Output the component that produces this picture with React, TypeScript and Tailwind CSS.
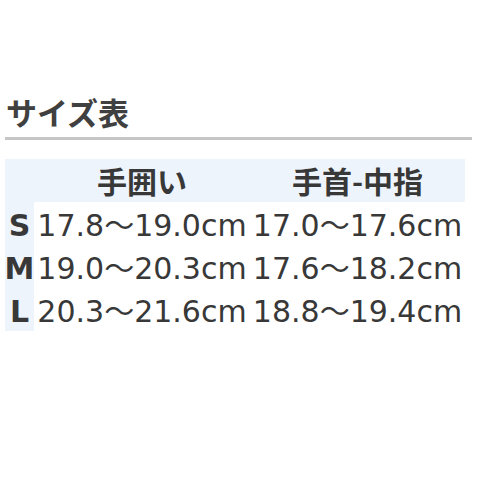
import React from "react";

const rows = [
  ["S", "17.8～19.0cm", "17.0～17.6cm"],
  ["M", "19.0～20.3cm", "17.6～18.2cm"],
  ["L", "20.3～21.6cm", "18.8～19.4cm"],
];

const font = { fontFamily: '"DejaVu Sans", "Noto Sans CJK JP", sans-serif' };
const cjk = { fontFamily: '"Noto Sans CJK JP", sans-serif' };

export default function App() {
  return (
    <div className="w-[480px] h-[480px] bg-white pt-[92px] px-[5px] text-[#383838]">
      <div className="w-[467px] border-b-[3px] border-[#c6c6c6] pb-[5px]">
        <h2 className="text-[31px] leading-[40px] font-bold pl-[1px] text-[#404040]" style={cjk}>
          サイズ表
        </h2>
      </div>
      <div className="mt-[19px] w-[460px] grid grid-cols-[29px_216px_215px]" style={font}>
        <div className="h-[43px] bg-[#eef4fc]" />
        <div className="h-[43px] bg-[#eef4fc] flex items-center justify-center text-[30px] font-bold" style={cjk}>
          手囲い
        </div>
        <div className="h-[43px] bg-[#eef4fc] flex items-center justify-center text-[30px] font-bold" style={cjk}>
          手首-中指
        </div>
        {rows.map((r, i) => (
          <React.Fragment key={r[0]}>
            <div
              className={`h-[43px] bg-[#eef4fc] flex items-center justify-center text-[30px] font-bold ${
                i === 0 ? "pt-[4px]" : "pt-[4px]"
              }`}
            >
              {r[0]}
            </div>
            <div className="h-[43px] pt-[4px] flex items-center justify-center text-[30px] whitespace-nowrap">
              {r[1]}
            </div>
            <div className="h-[43px] pt-[4px] flex items-center justify-center text-[30px] whitespace-nowrap">
              {r[2]}
            </div>
          </React.Fragment>
        ))}
      </div>
    </div>
  );
}
